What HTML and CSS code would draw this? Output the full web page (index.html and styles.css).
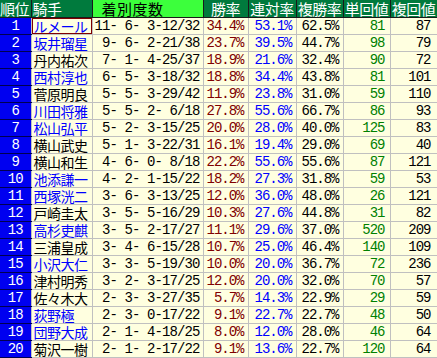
FILE: index.html
```html
<!DOCTYPE html>
<html lang="ja">
<head>
<meta charset="utf-8">
<link rel="stylesheet" href="styles.css">
</head>
<body>
<table class="stats">
<colgroup>
<col class="c-rank"><col class="c-name"><col class="c-rec"><col class="c-p1"><col class="c-p2"><col class="c-p3"><col class="c-v1"><col class="c-v2">
</colgroup>
<thead>
<tr>
<th class="h-rank">順位</th><th class="h-name">騎手</th><th class="h-rec">着別度数</th><th>勝率</th><th>連対率</th><th>複勝率</th><th>単回値</th><th>複回値</th>
</tr>
</thead>
<tbody>
<tr><td class="rank">1</td><td class="name blue sel">ルメール</td><td class="rec">11- 6- 3-12/32</td><td class="win">34.4%</td><td class="ren">53.1%</td><td class="fuku">62.5%</td><td class="tan">81</td><td class="fv">87</td></tr>
<tr><td class="rank">2</td><td class="name blue">坂井瑠星</td><td class="rec">9- 6- 2-21/38</td><td class="win">23.7%</td><td class="ren">39.5%</td><td class="fuku">44.7%</td><td class="tan">98</td><td class="fv">79</td></tr>
<tr><td class="rank">3</td><td class="name">丹内祐次</td><td class="rec">7- 1- 4-25/37</td><td class="win">18.9%</td><td class="ren">21.6%</td><td class="fuku">32.4%</td><td class="tan">90</td><td class="fv">72</td></tr>
<tr><td class="rank">4</td><td class="name blue">西村淳也</td><td class="rec">6- 5- 3-18/32</td><td class="win">18.8%</td><td class="ren">34.4%</td><td class="fuku">43.8%</td><td class="tan">81</td><td class="fv">101</td></tr>
<tr><td class="rank">5</td><td class="name">菅原明良</td><td class="rec">5- 5- 3-29/42</td><td class="win">11.9%</td><td class="ren">23.8%</td><td class="fuku">31.0%</td><td class="tan">59</td><td class="fv">110</td></tr>
<tr><td class="rank">6</td><td class="name blue">川田将雅</td><td class="rec">5- 5- 2- 6/18</td><td class="win">27.8%</td><td class="ren">55.6%</td><td class="fuku">66.7%</td><td class="tan">86</td><td class="fv">93</td></tr>
<tr><td class="rank">7</td><td class="name blue">松山弘平</td><td class="rec">5- 2- 3-15/25</td><td class="win">20.0%</td><td class="ren">28.0%</td><td class="fuku">40.0%</td><td class="tan">125</td><td class="fv">83</td></tr>
<tr><td class="rank">8</td><td class="name">横山武史</td><td class="rec">5- 1- 3-22/31</td><td class="win">16.1%</td><td class="ren">19.4%</td><td class="fuku">29.0%</td><td class="tan">69</td><td class="fv">40</td></tr>
<tr><td class="rank">9</td><td class="name">横山和生</td><td class="rec">4- 6- 0- 8/18</td><td class="win">22.2%</td><td class="ren">55.6%</td><td class="fuku">55.6%</td><td class="tan">87</td><td class="fv">121</td></tr>
<tr><td class="rank">10</td><td class="name blue">池添謙一</td><td class="rec">4- 2- 1-15/22</td><td class="win">18.2%</td><td class="ren">27.3%</td><td class="fuku">31.8%</td><td class="tan">59</td><td class="fv">53</td></tr>
<tr><td class="rank">11</td><td class="name blue">西塚洸二</td><td class="rec">3- 6- 3-13/25</td><td class="win">12.0%</td><td class="ren">36.0%</td><td class="fuku">48.0%</td><td class="tan">26</td><td class="fv">121</td></tr>
<tr><td class="rank">12</td><td class="name">戸崎圭太</td><td class="rec">3- 5- 5-16/29</td><td class="win">10.3%</td><td class="ren">27.6%</td><td class="fuku">44.8%</td><td class="tan">31</td><td class="fv">82</td></tr>
<tr><td class="rank">13</td><td class="name blue">高杉吏麒</td><td class="rec">3- 5- 2-17/27</td><td class="win">11.1%</td><td class="ren">29.6%</td><td class="fuku">37.0%</td><td class="tan">520</td><td class="fv">209</td></tr>
<tr><td class="rank">14</td><td class="name">三浦皇成</td><td class="rec">3- 4- 6-15/28</td><td class="win">10.7%</td><td class="ren">25.0%</td><td class="fuku">46.4%</td><td class="tan">140</td><td class="fv">109</td></tr>
<tr><td class="rank">15</td><td class="name blue">小沢大仁</td><td class="rec">3- 3- 5-19/30</td><td class="win">10.0%</td><td class="ren">20.0%</td><td class="fuku">36.7%</td><td class="tan">72</td><td class="fv">236</td></tr>
<tr><td class="rank">16</td><td class="name">津村明秀</td><td class="rec">3- 2- 3-17/25</td><td class="win">12.0%</td><td class="ren">20.0%</td><td class="fuku">32.0%</td><td class="tan">70</td><td class="fv">57</td></tr>
<tr><td class="rank">17</td><td class="name">佐々木大</td><td class="rec">2- 3- 3-27/35</td><td class="win">5.7%</td><td class="ren">14.3%</td><td class="fuku">22.9%</td><td class="tan">29</td><td class="fv">59</td></tr>
<tr><td class="rank">18</td><td class="name blue">荻野極</td><td class="rec">2- 3- 0-17/22</td><td class="win">9.1%</td><td class="ren">22.7%</td><td class="fuku">22.7%</td><td class="tan">48</td><td class="fv">50</td></tr>
<tr><td class="rank">19</td><td class="name blue">団野大成</td><td class="rec">2- 1- 4-18/25</td><td class="win">8.0%</td><td class="ren">12.0%</td><td class="fuku">28.0%</td><td class="tan">46</td><td class="fv">64</td></tr>
<tr><td class="rank">20</td><td class="name">菊沢一樹</td><td class="rec">2- 1- 2-17/22</td><td class="win">9.1%</td><td class="ren">13.6%</td><td class="fuku">22.7%</td><td class="tan">120</td><td class="fv">64</td></tr>
</tbody>
</table>
</body>
</html>
```
FILE: styles.css
```css
html, body {
  margin: 0;
  padding: 0;
  background: #ffffe0;
}

.stats {
  border-collapse: collapse;
  table-layout: fixed;
  width: 437px;
  font-family: "Liberation Mono", "Noto Sans CJK JP", monospace;
}

.c-rank { width: 31px; }
.c-name { width: 61px; }
.c-rec { width: 111px; }
.c-p1 { width: 45px; }
.c-p2 { width: 48px; }
.c-p3 { width: 47px; }
.c-v1 { width: 47px; }
.c-v2 { width: 47px; }

.stats th {
  height: 17px;
  padding: 0;
  background: #007a3d;
  color: #ffffff;
  font-family: "Noto Sans CJK JP", sans-serif;
  font-weight: normal;
  font-size: 15px;
  line-height: 17px;
  letter-spacing: -0.5px;
  text-align: center;
  border: 1px solid #1a1a1a;
  border-top: none;
  white-space: nowrap;
  overflow: hidden;
}

.stats th.h-rank { border-left: none; text-align: left; }
.stats th.h-name { text-align: left; padding-left: 1px; }
.stats th.h-rec {
  background: #3cff3c;
  color: #000000;
  text-align: left;
  padding-left: 9px;
  letter-spacing: 0.5px;
}

.stats td {
  height: 16px;
  padding: 0 4px 0 0;
  line-height: 16px;
  font-size: 14px;
  letter-spacing: -1px;
  text-align: right;
  white-space: pre;
  overflow: hidden;
  border: 1px solid #c0c0c0;
  color: #000000;
}

.stats td.rank {
  background: #0000f0;
  color: #ffffff;
  text-align: center;
  padding: 0;
  border-left: none;
  border-top-color: #000050;
  border-bottom-color: #000050;
}

.stats td.name {
  font-family: "Noto Sans CJK JP", sans-serif;
  font-size: 14px;
  letter-spacing: -0.5px;
  text-align: left;
  padding: 0 0 0 2px;
}

.stats td.sel {
  box-shadow: inset 0 0 0 1px #800000;
}

.stats td.blue { color: #0000ff; }

.stats td.rec {
  letter-spacing: -0.9px;
  padding-right: 3px;
}

.stats td.win { color: #800000; }
.stats td.ren { color: #0000ff; }
.stats td.fuku { color: #000000; }
.stats td.tan { color: #008000; padding-right: 5px; }
.stats td.fv { color: #000000; padding-right: 6px; }
```
